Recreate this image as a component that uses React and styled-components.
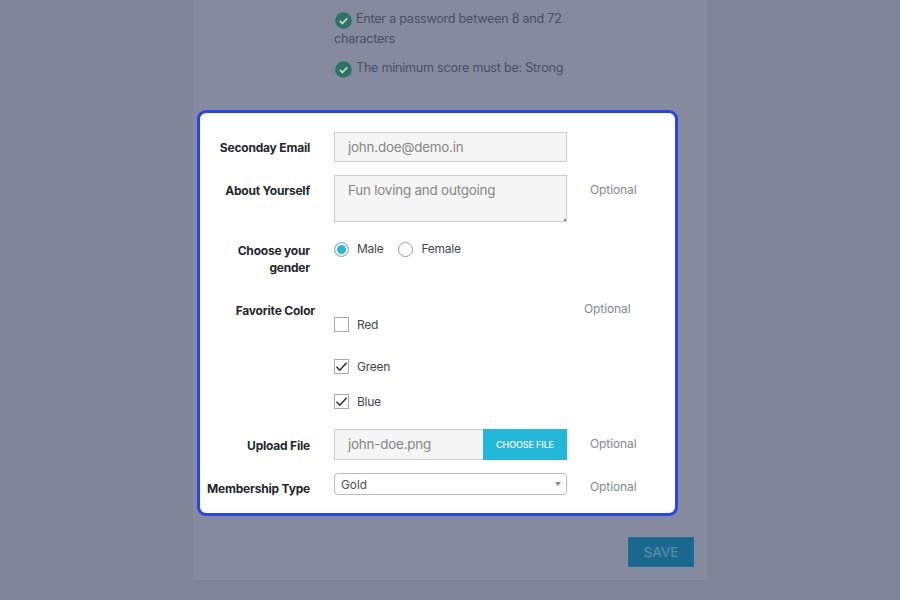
import React from 'react';
import styled, { createGlobalStyle } from 'styled-components';

const Global = createGlobalStyle`
  html, body {
    margin: 0;
    padding: 0;
    height: 600px;
    overflow: hidden;
    background: #7f8499;
    font-family: Inter, "Noto Sans", sans-serif;
  }
  * { box-sizing: border-box; }
`;

const Panel = styled.main`
  width: 514px;
  height: 580px;
  margin: 0 auto;
  padding: 9px 13px 0 4px;
  background: #858a9e;
  display: flex;
  flex-direction: column;
`;

const Hints = styled.ul`
  list-style: none;
  margin: 0;
  height: 101px;
  padding: 0 0 0 137px;
  width: 385px;
  flex: none;
  display: flex;
  flex-direction: column;
  gap: 11px;
`;

const Hint = styled.li`
  font-size: 12.6px;
  letter-spacing: -0.25px;
  line-height: 19px;
  height: ${p => p.$lines * 19}px;
  color: #4a4e66;
  svg {
    vertical-align: -6px;
    margin: 0 4px 0 1px;
  }
`;

const Card = styled.section`
  width: 481px;
  height: 406px;
  flex: none;
  border: 3px solid #2146f0;
  border-radius: 9px;
  background: #fff;
  padding-top: 19px;
  display: flex;
  flex-direction: column;
`;

const Row = styled.div`
  display: grid;
  grid-template-columns: 111px 233px auto;
  column-gap: 23px;
  margin-bottom: ${p => p.$gap || 0}px;
`;

const Label = styled.label`
  font-size: 12px;
  letter-spacing: -0.2px;
  font-weight: 700;
  line-height: 17px;
  color: #25272e;
  text-align: right;
  padding-top: ${p => p.$top || 0}px;
  padding-right: 1px;
  margin-right: ${p => p.$shift ? -p.$shift : 0}px;
`;

const Optional = styled.span`
  font-size: 12px;
  letter-spacing: -0.1px;
  line-height: 17px;
  color: #85888e;
  padding-top: ${p => p.$top || 0}px;
  margin-left: ${p => p.$shift ? -p.$shift : 0}px;
  margin-top: ${p => p.$up ? -p.$up : 0}px;
`;

const TextInput = styled.input`
  display: block;
  width: 100%;
  height: 30px;
  padding: 0 13px;
  border: 1px solid #ccc;
  background: #f5f5f5;
  font: 13.4px Inter, sans-serif;
  letter-spacing: -0.2px;
  color: #858585;
  outline: none;
`;

const TextAreaWrap = styled.div`
  position: relative;
  height: 47px;
  &::after {
    content: '';
    position: absolute;
    right: 1px;
    bottom: 1px;
    width: 2px;
    height: 2px;
    background: #888;
  }
`;

const TextArea = styled.textarea`
  display: block;
  width: 100%;
  height: 47px;
  padding: 5px 13px;
  border: 1px solid #ccc;
  border-radius: 0;
  background: #f5f5f5;
  font: 13.4px/19px Inter, sans-serif;
  letter-spacing: -0.2px;
  color: #858585;
  outline: none;
  resize: none;
`;

const Options = styled.div`
  display: flex;
  align-items: flex-start;
  gap: 15px;
`;

const OptionText = styled.span`
  font-size: 12px;
  letter-spacing: -0.25px;
  line-height: 15px;
  color: #45474e;
`;

const RadioOption = styled.span`
  display: flex;
  align-items: flex-start;
  gap: 8px;
  ${OptionText} {
    line-height: 13px;
  }
`;

const RadioDot = styled.span`
  width: 15px;
  height: 15px;
  flex: none;
  border-radius: 50%;
  border: 1px solid ${p => p.$on ? '#aaa' : '#999'};
  background: ${p => p.$on ? '#22b8da' : '#fff'};
  box-shadow: ${p => p.$on ? 'inset 0 0 0 2px #fff' : 'none'};
`;

const Checks = styled.div`
  display: flex;
  flex-direction: column;
  padding-top: 15px;
`;

const CheckOption = styled.span`
  display: flex;
  align-items: center;
  gap: 8px;
  height: 15px;
  margin-bottom: ${p => p.$gap || 0}px;
`;

const CheckBox = styled.span`
  width: 15px;
  height: 15px;
  border: 1px solid #aaa;
  background: #fff;
  display: flex;
  align-items: center;
  justify-content: center;
`;

const FileField = styled.div`
  display: flex;
  height: 31px;
`;

const FileName = styled.div`
  flex: 1;
  border: 1px solid #ccc;
  border-right: none;
  background: #f5f5f5;
  padding-left: 13px;
  font-size: 13.4px;
  letter-spacing: -0.2px;
  line-height: 29px;
  color: #858585;
`;

const FileButton = styled.button`
  width: 84px;
  border: none;
  background: #22b8da;
  color: #fff;
  font: 500 9px Inter, sans-serif;
  letter-spacing: -0.1px;
  padding: 0;
`;

const SelectWrap = styled.div`
  position: relative;
  height: 22px;
  &::after {
    content: '';
    position: absolute;
    right: 6px;
    top: 9px;
    border-left: 3.5px solid transparent;
    border-right: 3.5px solid transparent;
    border-top: 4.5px solid #888;
  }
`;

const Select = styled.select`
  appearance: none;
  display: block;
  width: 100%;
  height: 22px;
  padding: 1px 6px 0;
  border: 1px solid #bbb;
  border-radius: 4px;
  background: #fff;
  font: 11.8px Inter, sans-serif;
  color: #4a4a4a;
  outline: none;
`;

const SaveBar = styled.div`
  display: flex;
  justify-content: flex-end;
  padding: 21px 0 0;
`;

const SaveButton = styled.button`
  width: 66px;
  height: 30px;
  border: 1px solid #1f6f96;
  background: #19688f;
  color: #5d8aa6;
  font: 500 13.5px Inter, sans-serif;
  padding: 0;
`;

const CheckCircle = () => (
  <svg width="17" height="17" viewBox="0 0 17 17">
    <circle cx="8.5" cy="8.5" r="8.3" fill="#2b7461" />
    <path d="M4.8 8.8l2.6 2.6 4.8-5" fill="none" stroke="#c4d2cf" strokeWidth="1.8" />
  </svg>
);

const Tick = () => (
  <svg width="13" height="13" viewBox="0 0 13 13">
    <path d="M1.5 6.8l3.3 3.4L11.6 2.8" fill="none" stroke="#2b2b2b" strokeWidth="1.4" />
  </svg>
);

const App = () => (
  <>
    <Global />
    <Panel>
      <Hints>
        <Hint $lines={2}><CheckCircle />Enter a password between 8 and 72 characters</Hint>
        <Hint $lines={1}><CheckCircle />The minimum score must be: Strong</Hint>
      </Hints>

      <Card>
        <Row $gap={13}>
          <Label $top={7}>Seconday Email</Label>
          <TextInput value="john.doe@demo.in" readOnly />
        </Row>

        <Row $gap={20}>
          <Label $top={7}>About Yourself</Label>
          <TextAreaWrap>
            <TextArea value="Fun loving and outgoing" readOnly />
          </TextAreaWrap>
          <Optional $top={6}>Optional</Optional>
        </Row>

        <Row $gap={26}>
          <Label>Choose your gender</Label>
          <Options>
            <RadioOption><RadioDot $on /><OptionText>Male</OptionText></RadioOption>
            <RadioOption><RadioDot /><OptionText>Female</OptionText></RadioOption>
          </Options>
        </Row>

        <Row $gap={20}>
          <Label $shift={5}>Favorite Color</Label>
          <Checks>
            <CheckOption $gap={27}><CheckBox /><OptionText>Red</OptionText></CheckOption>
            <CheckOption $gap={20}><CheckBox><Tick /></CheckBox><OptionText>Green</OptionText></CheckOption>
            <CheckOption><CheckBox><Tick /></CheckBox><OptionText>Blue</OptionText></CheckOption>
          </Checks>
          <Optional $shift={6} $up={2}>Optional</Optional>
        </Row>

        <Row $gap={13}>
          <Label $top={8}>Upload File</Label>
          <FileField>
            <FileName>john-doe.png</FileName>
            <FileButton>CHOOSE FILE</FileButton>
          </FileField>
          <Optional $top={6}>Optional</Optional>
        </Row>

        <Row>
          <Label $top={7}>Membership Type</Label>
          <SelectWrap>
            <Select defaultValue="Gold"><option>Gold</option></Select>
          </SelectWrap>
          <Optional $top={5}>Optional</Optional>
        </Row>
      </Card>

      <SaveBar>
        <SaveButton>SAVE</SaveButton>
      </SaveBar>
    </Panel>
  </>
);

export default App;
